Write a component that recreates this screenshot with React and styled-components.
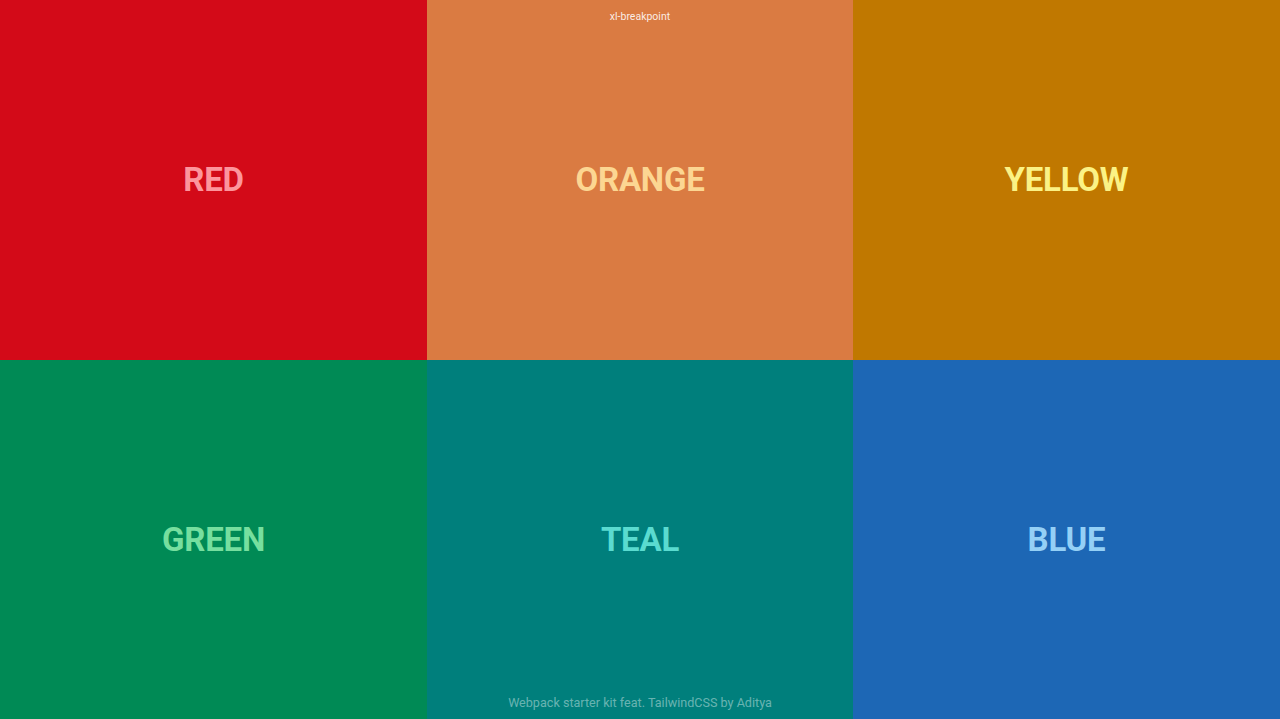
import React from 'react';
import styled, { createGlobalStyle } from 'styled-components';

const GlobalStyle = createGlobalStyle`
  html, body, #root {
    margin: 0;
    padding: 0;
    height: 100%;
  }
  body {
    font-family: Roboto, "Liberation Sans", sans-serif;
    overflow: hidden;
  }
`;

const Page = styled.div`
  position: relative;
  width: 1280px;
  height: 719px;
  display: grid;
  grid-template-columns: 427px 426px 427px;
  grid-template-rows: 359.5px 359.5px;
`;

const Panel = styled.div`
  display: flex;
  align-items: center;
  justify-content: center;
  background-color: ${props => props.bg};
`;

const Label = styled.h1`
  margin: 0;
  font-size: 33px;
  font-weight: 700;
  letter-spacing: -0.2px;
  color: ${props => props.fg};
`;

const Breakpoint = styled.div`
  position: absolute;
  top: 10px;
  left: 0;
  right: 0;
  text-align: center;
  font-size: 10.5px;
  color: rgba(255, 255, 255, 0.88);
`;

const Footer = styled.div`
  position: absolute;
  bottom: 9px;
  left: 0;
  right: 0;
  text-align: center;
  font-size: 12.6px;
  color: rgba(255, 255, 255, 0.42);
`;

const colors = [
  { name: 'RED', bg: '#d30a18', fg: '#fd959c' },
  { name: 'ORANGE', bg: '#da7b42', fg: '#fcd692' },
  { name: 'YELLOW', bg: '#c07800', fg: '#fbf285' },
  { name: 'GREEN', bg: '#008a55', fg: '#76df9f' },
  { name: 'TEAL', bg: '#007f7c', fg: '#5adbd0' },
  { name: 'BLUE', bg: '#1d67b5', fg: '#94d0f6' },
];

function App() {
  return (
    <>
      <GlobalStyle />
      <Page>
        {colors.map(c => (
          <Panel key={c.name} bg={c.bg}>
            <Label fg={c.fg}>{c.name}</Label>
          </Panel>
        ))}
        <Breakpoint>xl-breakpoint</Breakpoint>
        <Footer>Webpack starter kit feat. TailwindCSS by Aditya</Footer>
      </Page>
    </>
  );
}

export default App;
